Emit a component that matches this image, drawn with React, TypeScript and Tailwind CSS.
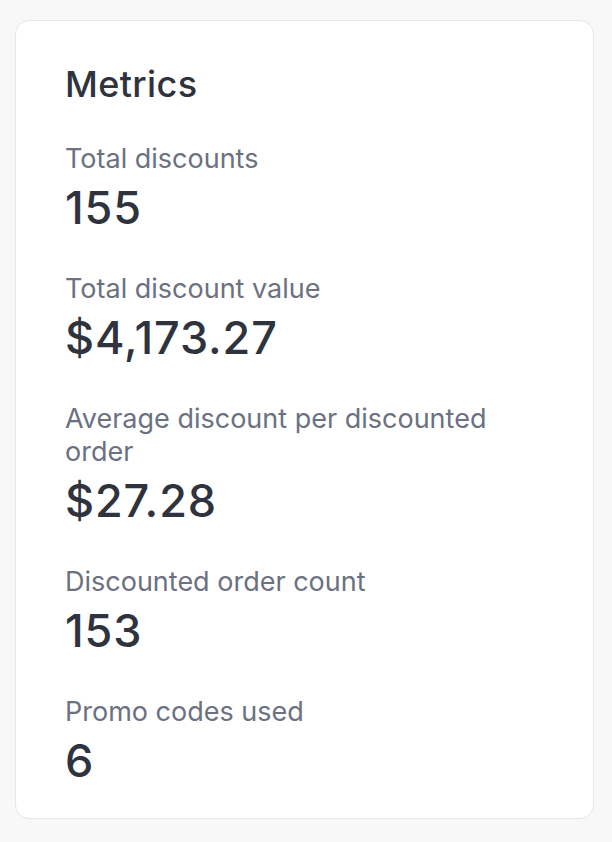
import React from "react";

const metrics = [
  { label: "Total discounts", value: "155" },
  { label: "Total discount value", value: "$4,173.27" },
  { label: "Average discount per discounted order", value: "$27.28" },
  { label: "Discounted order count", value: "153" },
  { label: "Promo codes used", value: "6" },
];

export default function App() {
  return (
    <div className="min-h-[842px] w-[612px] bg-[#f8f8f9] pl-[15px] pt-[20px] font-['Inter',sans-serif]">
      <div className="w-[579px] h-[799px] rounded-[14px] border border-[#e4e6ea] bg-white pl-[49px] pr-[40px] pt-[41px]">
        <h2 className="text-[36px] leading-[44px] font-medium tracking-[0.01em] text-[#2f333d]">Metrics</h2>
        <div className="mt-[36px] flex flex-col gap-[38px]">
          {metrics.map((m) => (
            <div key={m.label} className="flex flex-col gap-[7px]">
              <div className="text-[27px] leading-[33px] text-[#6b7180] max-w-[440px]">{m.label}</div>
              <div className="text-[45px] leading-[52px] font-medium tracking-[0.02em] text-[#2f333d]">{m.value}</div>
            </div>
          ))}
        </div>
      </div>
    </div>
  );
}
